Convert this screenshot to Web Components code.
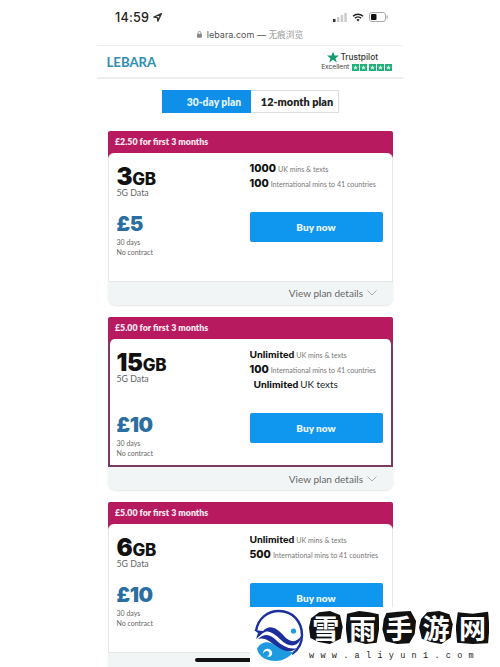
<!DOCTYPE html>
<html>
<head>
<meta charset="utf-8">
<style>
  html, body { margin: 0; padding: 0; background: #fff; }
  body { width: 500px; height: 667px; overflow: hidden; position: relative; font-family: "Lato", "Liberation Sans", sans-serif; }
</style>
</head>
<body>
<phone-status></phone-status>
<url-bar></url-bar>
<site-header></site-header>
<plan-tabs></plan-tabs>
<plan-list>
  <plan-card promo="£2.50 for first 3 months" gb="3" price="£5" details>
    <plan-line slot="lines" big="1000" small="UK mins &amp; texts"></plan-line>
    <plan-line slot="lines" big="100" small="International mins to 41 countries"></plan-line>
  </plan-card>
  <plan-card promo="£5.00 for first 3 months" gb="15" price="£10" selected details>
    <plan-line slot="lines" big="Unlimited" small="UK mins &amp; texts"></plan-line>
    <plan-line slot="lines" big="100" small="International mins to 41 countries"></plan-line>
    <plan-line slot="lines" big="Unlimited" rest="UK texts" indent></plan-line>
  </plan-card>
  <plan-card promo="£5.00 for first 3 months" gb="6" price="£10">
    <plan-line slot="lines" big="Unlimited" small="UK mins &amp; texts"></plan-line>
    <plan-line slot="lines" big="500" small="International mins to 41 countries"></plan-line>
  </plan-card>
</plan-list>
<home-bar></home-bar>
<site-stamp></site-stamp>

<script>
class PhoneStatus extends HTMLElement {
  constructor() {
    super();
    this.attachShadow({ mode: 'open' });
    this.shadowRoot.innerHTML = `
      <style>
        :host { display: flex; justify-content: space-between; align-items: center; height: 20px; padding: 7px 112px 0 115px; color: #222; }
        .time { font: 500 12.6px "Inter", "Liberation Sans", sans-serif; display: flex; align-items: center; gap: 4px; letter-spacing: .2px; }
        .icons { display: flex; align-items: center; gap: 5px; }
        svg { display: block; }
      </style>
      <div class="time">14:59
        <svg width="9" height="9" viewBox="0 0 10 10"><path d="M9.300.7 1 4.600 4.900 5.100 5.400 9Z" fill="none" stroke="#333" stroke-width="1.500" stroke-linejoin="round"/></svg>
      </div>
      <div class="icons">
        <svg width="14" height="9" viewBox="0 0 14 9"><rect x="0" y="6" width="2.500" height="3" fill="#333"/><rect x="4" y="4" width="2.500" height="5" fill="#ccc"/><rect x="7.700" y="2" width="2.500" height="7" fill="#ccc"/><rect x="11.300" y="0" width="2.500" height="9" fill="#ccc"/></svg>
        <svg width="12" height="9" viewBox="0 0 13 10"><path d="M1 3.600A8 8 0 0 1 12 3.600M3 5.800A5 5 0 0 1 10 5.800" fill="none" stroke="#222" stroke-width="1.700"/><path d="M4.700 7.500A2.600 2.600 0 0 1 8.300 7.500L6.500 9.500Z" fill="#222"/></svg>
        <svg width="19" height="10" viewBox="0 0 19 10"><rect x=".5" y=".5" width="16" height="9" rx="2.500" fill="none" stroke="#aaa"/><rect x="2" y="2" width="5.500" height="6" rx="1" fill="#111"/><rect x="17.500" y="3.400" width="1.200" height="3.200" fill="#aaa"/></svg>
      </div>`;
  }
}
customElements.define('phone-status', PhoneStatus);

class UrlBar extends HTMLElement {
  constructor() {
    super();
    this.attachShadow({ mode: 'open' });
    this.shadowRoot.innerHTML = `
      <style>
        :host { display: flex; justify-content: center; align-items: center; gap: 5px; height: 14px; font: 9px "Inter", "Liberation Sans", "Noto Sans CJK SC", sans-serif; color: #555; }
        .cn { color: #999; font-size: 8.700px; }
      </style>
      <svg width="5" height="7" viewBox="0 0 6 8"><rect y="3" width="6" height="5" rx="1" fill="#888"/><path d="M1.300 3.500V2a1.700 1.700 0 0 1 3.400 0v1.500" fill="none" stroke="#888"/></svg>
      <span>lebara.com — <span class="cn">无痕浏览</span></span>`;
  }
}
customElements.define('url-bar', UrlBar);

class SiteHeader extends HTMLElement {
  constructor() {
    super();
    this.attachShadow({ mode: 'open' });
    const star = `<svg width="7" height="7" viewBox="0 0 7 7"><rect width="7" height="7" fill="#1fb078"/><path fill="#c9f2df" d="M3.500 1l.7 1.700 1.800.1-1.400 1.100.5 1.800-1.600-1-1.600 1 .5-1.800L1 2.800l1.800-.1z"/></svg>`;
    this.shadowRoot.innerHTML = `
      <style>
        :host { display: flex; justify-content: space-between; align-items: center; box-sizing: content-box; width: 285.500px; height: 31px; margin: 4px auto 0; padding: 0 11px 0 9.500px; border-top: 1px solid #eee; border-bottom: 2px solid #eee; }
        .logo { font: 700 13.200px "Lato", "Liberation Sans", sans-serif; color: #2f8fb0; }
        .tp { display: flex; flex-direction: column; align-items: flex-end; }
        .name { display: flex; align-items: center; gap: 1px; font: 500 8.300px "Inter", "Liberation Sans", sans-serif; color: #333; margin-right: 14px; line-height: 12px; }
        .rate { display: flex; align-items: center; gap: 3px; font: 6.600px "Inter", "Liberation Sans", sans-serif; color: #444; line-height: 9px; }
        .stars { display: flex; gap: 1.200px; }
        svg { display: block; }
      </style>
      <div class="logo">LEBARA</div>
      <div class="tp">
        <div class="name"><svg width="12" height="12" viewBox="0 0 24 24"><path fill="#0f9d6b" d="M12 1l3 8h9l-7 5.500 2.700 8.500L12 17.700 4.300 23 7 14.500 0 9h9z"/></svg>Trustpilot</div>
        <div class="rate">Excellent <div class="stars">${star.repeat(5)}</div></div>
      </div>`;
  }
}
customElements.define('site-header', SiteHeader);

class PlanTabs extends HTMLElement {
  constructor() {
    super();
    this.attachShadow({ mode: 'open' });
    this.shadowRoot.innerHTML = `
      <style>
        :host { display: flex; justify-content: center; margin-top: 11px; font: 800 10.300px "Lato", "Liberation Sans", sans-serif; }
        div { height: 23px; display: flex; align-items: center; box-sizing: border-box; justify-content: center; }
        .on { width: 89px; background: #0f8fe8; color: #dff1ff; padding-left: 16px; }
        .off { width: 88px; color: #222; border: 1px solid #ddd; border-left: 0; padding-left: 6px; font-size: 10.900px; }
      </style>
      <div class="on">30-day plan</div><div class="off">12-month plan</div>`;
  }
}
customElements.define('plan-tabs', PlanTabs);

class PlanList extends HTMLElement {
  constructor() {
    super();
    this.attachShadow({ mode: 'open' });
    this.shadowRoot.innerHTML = `
      <style>
        :host { display: flex; flex-direction: column; gap: 12px; width: 285px; margin: 18px 0 0 107.500px; }
      </style>
      <slot></slot>`;
  }
}
customElements.define('plan-list', PlanList);

class PlanLine extends HTMLElement {
  constructor() {
    super();
    this.attachShadow({ mode: 'open' });
    const big = this.getAttribute('big');
    const small = this.getAttribute('small');
    const rest = this.getAttribute('rest');
    const numeric = !isNaN(big);
    this.shadowRoot.innerHTML = `
      <style>
        :host { display: block; height: 15px; line-height: 15px; white-space: nowrap; color: #111; ${this.hasAttribute('indent') ? 'padding-left: 4px;' : ''} }
        b { font: 900 10.200px "Lato", "Liberation Sans", sans-serif; }
        b.num { font: 800 10.500px "Inter", "Liberation Sans", sans-serif; }
        small { font: 7.100px "Lato", "Liberation Sans", sans-serif; color: #777; margin-left: 2px; }
        .rest { font: 9.800px "Lato", "Liberation Sans", sans-serif; color: #222; margin-left: 2px; }
      </style>
      <b class="${numeric ? 'num' : ''}">${big}</b>${small ? `<small>${small}</small>` : ''}${rest ? `<span class="rest">${rest}</span>` : ''}`;
  }
}
customElements.define('plan-line', PlanLine);

class PlanCard extends HTMLElement {
  constructor() {
    super();
    this.attachShadow({ mode: 'open' });
    const selected = this.hasAttribute('selected');
    const details = this.hasAttribute('details') ? `View plan details
        <svg width="10" height="6" viewBox="0 0 10 6"><path d="M.5.5 5 5 9.500.5" fill="none" stroke="#999" stroke-width=".8"/></svg>` : '';
    this.shadowRoot.innerHTML = `
      <style>
        :host { display: block; }
        .promo { height: 27px; background: #b81a60; color: #fae6ef; font: 800 8.800px/21px "Lato", "Liberation Sans", sans-serif; padding-left: 7.500px; border-radius: 2px 2px 0 0; }
        .body { display: grid; grid-template-columns: ${selected ? '140px' : '141px'} 133px; height: 128.500px; box-sizing: border-box; background: #fff; border: ${selected ? '2px solid #7a3a66' : '1px solid #e6e6e6'}; border-top: 0; border-radius: 6px 6px 0 0; margin-top: -5px; position: relative; }
        .left { padding: 12px 0 0 ${selected ? 7 : 8}px; }
        .right { padding-top: 5px; }
        .gb { font: 900 24px/24px "Inter", "Liberation Sans", sans-serif; color: #111; letter-spacing: -.3px; }
        .gb span { font-size: 17px; font-weight: 800; }
        .data { font: 8.800px/8px "Lato", "Liberation Sans", sans-serif; color: #666; margin-top: -2px; }
        .price { font: 900 20.500px/22px "Inter", "Liberation Sans", sans-serif; color: #2a6f9f; margin-top: ${selected ? 31 : 16}px; letter-spacing: -.4px; }
        .meta { font: 7px/10px "Lato", "Liberation Sans", sans-serif; color: #666; margin-top: 2px; }
        .buy { height: 30px; background: #0f96ee; color: #e8f5ff; font: 800 10px "Lato", "Liberation Sans", sans-serif; display: flex; justify-content: center; align-items: center; border-radius: 2px; margin-top: 24px; }
        .foot { height: 23px; display: flex; justify-content: flex-end; align-items: center; gap: 4px; padding-right: 15.500px; background: #f2f5f6; border-radius: 0 0 8px 8px; font: 10px "Lato", "Liberation Sans", sans-serif; color: #666; box-shadow: 0 1px 2px #0000001a; }
      </style>
      <div class="promo">${this.getAttribute('promo')}</div>
      <div class="body">
        <div class="left">
          <div class="gb">${this.getAttribute('gb')}<span>GB</span></div>
          <div class="data">5G Data</div>
          <div class="price">${this.getAttribute('price')}</div>
          <div class="meta">30 days<br>No contract</div>
        </div>
        <div class="right">
          <slot name="lines"></slot>
          <div class="buy"><span>Buy now</span></div>
        </div>
      </div>
      <div class="foot">${details}</div>`;
  }
}
customElements.define('plan-card', PlanCard);

class HomeBar extends HTMLElement {
  constructor() {
    super();
    this.attachShadow({ mode: 'open' });
    this.shadowRoot.innerHTML = `
      <style>
        :host { display: block; position: absolute; left: 195px; top: 658px; width: 60px; height: 3.500px; background: #111; border-radius: 2px; }
      </style>`;
  }
}
customElements.define('home-bar', HomeBar);

class SiteStamp extends HTMLElement {
  constructor() {
    super();
    this.attachShadow({ mode: 'open' });
    const shapes = [
      '6% 22%, 30% 4%, 62% 0, 92% 12%, 100% 48%, 94% 84%, 62% 100%, 28% 94%, 4% 82%, 0 50%',
      '4% 8%, 40% 0, 70% 4%, 98% 10%, 100% 50%, 92% 96%, 60% 100%, 30% 92%, 6% 98%, 0 50%',
      '12% 6%, 46% 2%, 84% 0, 100% 30%, 96% 70%, 80% 98%, 44% 100%, 10% 92%, 0 56%, 4% 26%',
      '24% 4%, 60% 0, 90% 10%, 100% 40%, 94% 80%, 66% 100%, 34% 94%, 8% 84%, 0 50%, 6% 24%',
      '6% 4%, 50% 8%, 96% 2%, 100% 50%, 96% 98%, 50% 100%, 4% 96%, 0 50%'
    ];
    const chars = Array.from('雪雨手游网').map((c, i) => `<span style="clip-path: polygon(${shapes[i]})">${c}</span>`).join('');
    this.shadowRoot.innerHTML = `
      <style>
        :host { display: flex; position: absolute; left: 250px; top: 607px; width: 250px; height: 60px; background: #fff; }
        svg { flex: none; display: block; }
        .txt { display: flex; flex-direction: column; margin: 4px 0 0 3px; }
        .cn { display: flex; gap: 3px; }
        .cn span { width: 33.700px; height: 33px; background: #111; color: #fff; font: 700 27px/33px "Noto Sans CJK SC", sans-serif; text-align: center; display: block; }
        .url { font: 400 8.500px/12px "Liberation Mono", monospace; letter-spacing: 6.300px; color: #222; white-space: nowrap; margin-top: 6px; }
      </style>
      <svg width="56" height="56" viewBox="0 0 56 56">
        <path d="M6 24C8 11 18 4 29 4 43 4 52 15 52 28 52 36 48 43 42 47" fill="none" stroke="#1c2f9a" stroke-width="2.400"/>
        <path d="M4 23 13 24C20 16 28 22 34 29 40 36 47 36 52 28 49 42 38 40 31 33 24 26 18 22 13 26L6 32 8 26Z" fill="#1c2f9a"/>
        <path d="M8 32C15 25 21 28 26 33 32 39 40 43 47 41 40 47 31 45 25 39 20 34 14 30 8 32Z" fill="#1c2f9a"/>
        <circle cx="43.500" cy="24" r="2.600" fill="#1e9be0"/>
        <path d="M7 42C10 35 18 33 25 38 31 43 38 45 44 45 38 51 32 54 26 54 16 54 9 50 7 42Z" fill="#1e9be0"/>
        <path d="M13 47C13 41 20 40 22 45 23 49 19 51 17 49 19 49 20 47 19 45 17 43 14 44 13 47Z" fill="#fff"/>
      </svg>
      <div class="txt">
        <div class="cn">${chars}</div>
        <div class="url">www.aliyun1.com</div>
      </div>`;
  }
}
customElements.define('site-stamp', SiteStamp);
</script>
</body>
</html>
